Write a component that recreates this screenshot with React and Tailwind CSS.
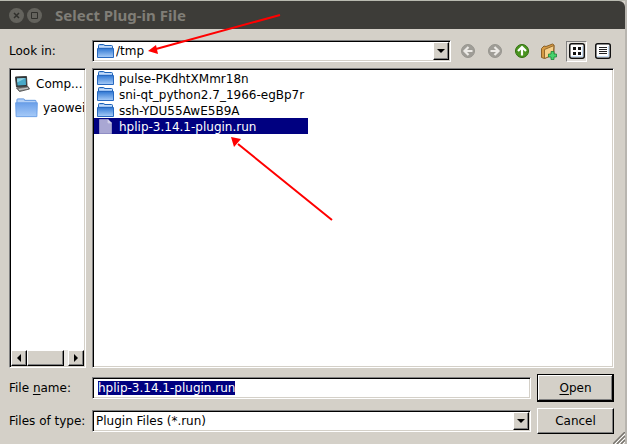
import { useEffect, useRef, useState } from 'react'

const files = [
  { name: 'pulse-PKdhtXMmr18n', type: 'folder' },
  { name: 'sni-qt_python2.7_1966-egBp7r', type: 'folder' },
  { name: 'ssh-YDU55AwE5B9A', type: 'folder' },
  { name: 'hplip-3.14.1-plugin.run', type: 'file' },
]

const sunken = 'border border-t-[#808080] border-l-[#808080] border-r-white border-b-white bg-white p-px shadow-[inset_1px_1px_0_#000,inset_-1px_-1px_0_#d4d0c8]'
const raised = 'border border-t-white border-l-white border-r-black border-b-black bg-[#d4d0c8] shadow-[inset_-1px_-1px_0_#808080]'
const raisedDefault = 'border border-black bg-[#d4d0c8] shadow-[inset_-1px_-1px_0_#000,inset_1px_1px_0_#fff,inset_-2px_-2px_0_#808080]'

function FolderIcon({ className }) {
  return (
    <svg viewBox="0 0 17 14" className={className} aria-hidden="true">
      <defs>
        <linearGradient id="folder" x1="0" y1="0" x2="0" y2="1">
          <stop offset="0" stopColor="#2f77d3" />
          <stop offset="1" stopColor="#a9cdf8" />
        </linearGradient>
      </defs>
      <path d="M1.500 5V1.500q0-1 1-1h4q1 0 1 1h7q1 0 1 1V5" fill="#9cc2f2" stroke="#1c62b9" />
      <path d="M2 2.500h13" stroke="#c5dcf8" />
      <path d="M.5 4.500h16v9H.5z" fill="url(#folder)" stroke="#2869c0" />
    </svg>
  )
}

function PlainFolderIcon() {
  return (
    <svg viewBox="0 0 24 20" className="ml-[2px] h-5 w-[23px] shrink-0" aria-hidden="true">
      <defs>
        <linearGradient id="home" x1="0" y1="0" x2="0" y2="1">
          <stop offset="0" stopColor="#6a9fe9" />
          <stop offset="1" stopColor="#a6caf8" />
        </linearGradient>
      </defs>
      <path d="M2 5V1.500q0-1 1-1h6q1 0 1 1.500h11q1 0 1 1V5" fill="#b4d0f6" stroke="#5b92dc" />
      <path d="M.7 4.500h22.600l-.5 14.500H1.200z" fill="url(#home)" stroke="#6b9fe6" />
    </svg>
  )
}

function FileIcon() {
  return (
    <svg viewBox="0 0 13 15" className="mx-[2px] h-[15px] w-[13px] shrink-0" aria-hidden="true">
      <path d="M.5.500h8.500l3.500 3.500v10.500h-12z" fill="#a9a7d3" stroke="#8f8dc4" />
      <path d="M9 .500v3.500h3.500" fill="#dcdcf0" stroke="#c8c6e4" />
    </svg>
  )
}

function ComputerIcon() {
  return (
    <svg viewBox="0 0 16 16" className="mx-px size-4 shrink-0" aria-hidden="true">
      <path d="M1.500 1 12.500.5l.5 10-10.500.5z" fill="#303436" stroke="#3a3d3e" />
      <path d="m3 2.500 8.700-.5.300 7-8.500.5z" fill="#48a9c8" />
      <path d="m3 2.500 8.700-.5-8.500 4.500z" fill="#8dd0e2" />
      <path d="M2.500 12 14 10.500l1.500 2.500-10 2.500z" fill="#8a8d8b" stroke="#444" strokeWidth=".8" />
      <path d="m5 13.500 9-1.300" stroke="#ddd" strokeWidth=".8" />
    </svg>
  )
}

function ArrowIcon({ direction }) {
  const paths = {
    left: 'M7.500 3 3.500 7l4 4M4 7h7.500',
    right: 'M6.500 3l4 4-4 4M10 7H2.500',
    up: 'M3 7l4-4 4 4M7 4v7.500',
  }
  const up = direction === 'up'
  return (
    <svg viewBox="0 0 14 14" className="size-[14px]" aria-hidden="true">
      <circle cx="7" cy="7" r="6.500" fill={up ? '#4a9420' : '#9f9d97'} stroke={up ? '#2f6f0d' : '#97958f'} />
      <path d={paths[direction]} fill="none" stroke={up ? '#fff' : '#eceae6'} strokeWidth="2.200" />
    </svg>
  )
}

function NewFolderIcon() {
  return (
    <svg viewBox="0 0 17 17" className="size-[17px]" aria-hidden="true">
      <path d="M1.500 5.500 4 3l2 .5 6.500-2.500 1.500 1v9l-9.500 4.500-3-1z" fill="#d59a43" stroke="#8a6128" />
      <path d="m4.500 6.500 9.500-4-1 9.500-8.500 3.500z" fill="#f6d08a" stroke="#94692e" />
      <path d="M11 8.500h3v2.500h2.500v3H14v2.500h-3V14H8.500v-3H11z" fill="#46d26c" stroke="#1a8438" strokeWidth=".8" />
    </svg>
  )
}

function ViewIcon({ list }) {
  return (
    <svg viewBox="0 0 16 16" className="size-4" aria-hidden="true">
      <rect x=".75" y=".75" width="14.500" height="14.500" rx="2" fill="#fff" stroke="#111" strokeWidth="1.500" />
      <path d="M2 13.500h12M13.500 3v10.500" stroke="#c4dcf3" />
      {list ? (
        <path d="M4 4.500h8M4 6.500h8M4 8.500h8M4 10.500h8" stroke="#222" />
      ) : (
        <path d="M4 4h3v3H4zM9 4h3v3H9zM4 9h3v3H4zM9 9h3v3H9z" fill="#111" />
      )}
    </svg>
  )
}

function Triangle({ path }) {
  return (
    <svg viewBox="0 0 8 8" className="size-2" aria-hidden="true">
      <path d={path} fill="#000" />
    </svg>
  )
}

function Combo({ id, value, icon }) {
  return (
    <div className={`flex h-[22px] min-w-0 flex-1 items-center ${sunken}`}>
      {icon}
      <select id={id} className="h-full min-w-0 flex-1 appearance-none bg-transparent pl-[2px] outline-none">
        <option>{value}</option>
      </select>
      <span className={`flex h-full w-4 shrink-0 items-center justify-center ${raised}`}>
        <Triangle path="M0 2h8L4 6z" />
      </span>
    </div>
  )
}

export default function App() {
  const [selected, setSelected] = useState('hplip-3.14.1-plugin.run')
  const [fileName, setFileName] = useState(selected)
  const nameRef = useRef(null)

  useEffect(() => {
    setFileName(selected)
    nameRef.current.focus()
    nameRef.current.select()
  }, [selected])

  return (
    <div className="relative flex h-screen flex-col overflow-hidden border-t border-r-2 border-t-[#b9bab0] border-r-[#b8b5af] bg-[#d4d0c8] font-['DejaVu_Sans',sans-serif] text-[12px] leading-4 text-black">
      <header className="flex h-7 shrink-0 items-center gap-[3px] rounded-tr-md bg-[#3d3c38] pl-[9px]">
        <button aria-label="Close" className="flex size-[15px] items-center justify-center rounded-full bg-[#64635d]">
          <svg viewBox="0 0 7 7" className="size-[7px]"><path d="m1 1 5 5m0-5-5 5" stroke="#30302c" strokeWidth="1.500" /></svg>
        </button>
        <button aria-label="Maximize" className="flex size-[15px] items-center justify-center rounded-full bg-[#64635d]">
          <svg viewBox="0 0 7 7" className="size-[7px]"><path d="M.5.500h6v6h-6z" fill="none" stroke="#30302c" /></svg>
        </button>
        <h1 className="ml-[10px] font-['Noto_Sans',sans-serif] text-[15px] font-bold text-[#807e77]">Select Plug-in File</h1>
      </header>

      <main className="flex min-h-0 flex-1 flex-col pt-[11px] pr-[11px] pb-[10px] pl-[9px]">
        <div className="flex items-center">
          <label htmlFor="look" className="w-[83px] shrink-0">Look in:</label>
          <Combo id="look" value="/tmp" icon={<FolderIcon className="ml-[3px] h-[14px] w-[17px] shrink-0" />} />
          <div className="ml-[3px] flex w-[160px] shrink-0 items-center">
            <button aria-label="Back" disabled className="flex w-[27px] justify-center"><ArrowIcon direction="left" /></button>
            <button aria-label="Forward" disabled className="flex w-[27px] justify-center"><ArrowIcon direction="right" /></button>
            <button aria-label="Parent Directory" className="flex w-[27px] justify-center"><ArrowIcon direction="up" /></button>
            <button aria-label="Create New Folder" className="flex w-[27px] justify-center"><NewFolderIcon /></button>
            <button aria-label="List View" className="ml-1 flex size-[21px] items-center justify-center border border-t-[#808080] border-r-white border-b-white border-l-[#808080] bg-[#e3e0db]"><ViewIcon /></button>
            <button aria-label="Detail View" className="ml-2"><ViewIcon list /></button>
          </div>
        </div>

        <div className="mt-[6px] flex min-h-0 flex-1 gap-[6px]">
          <aside className={`flex w-[77px] shrink-0 flex-col overflow-hidden ${sunken}`}>
            <ul className="flex-1 overflow-hidden pt-[2px] pl-[2px]">
              <li className="flex h-6 items-center gap-[5px] whitespace-nowrap"><ComputerIcon />Comp...</li>
              <li className="flex h-6 items-center gap-[5px] whitespace-nowrap"><PlainFolderIcon />yaowei</li>
            </ul>
            <div className="flex h-4 shrink-0">
              <button aria-label="Scroll left" className={`flex w-4 items-center justify-center ${raised}`}><Triangle path="M6 0v8L2 4z" /></button>
              <span className={`w-[37px] ${raised}`} />
              <span className="flex-1 bg-[#eae8e4]" />
              <button aria-label="Scroll right" className={`flex w-4 items-center justify-center ${raised}`}><Triangle path="M2 0v8l4-4z" /></button>
            </div>
          </aside>
          <div className={`min-w-0 flex-1 ${sunken}`}>
            <ul className="flex w-[214px] flex-col">
              {files.map(file => (
                <li key={file.name}>
                  <button
                    onClick={() => setSelected(file.name)}
                    className={`flex h-4 w-full items-center gap-[5px] pl-[3px] whitespace-nowrap ${selected === file.name ? 'bg-[#000080] text-white' : ''}`}
                  >
                    {file.type === 'folder' ? <FolderIcon className="h-[14px] w-[17px] shrink-0" /> : <FileIcon />}
                    <span className="pt-px">{file.name}</span>
                  </button>
                </li>
              ))}
            </ul>
          </div>
        </div>

        <div className="mt-[6px] flex items-center gap-[6px]">
          <label htmlFor="name" className="w-[77px] shrink-0">File <u className="underline-offset-2">n</u>ame:</label>
          <input
            id="name"
            ref={nameRef}
            value={fileName}
            onChange={e => setFileName(e.target.value)}
            className={`h-[22px] min-w-0 flex-1 indent-[4px] outline-none selection:bg-[#000080] selection:text-white ${sunken}`}
          />
          <button className={`h-7 w-[77px] shrink-0 ${raisedDefault}`}><u className="underline-offset-2">O</u>pen</button>
        </div>
        <div className="mt-[6px] flex items-center gap-[6px]">
          <label htmlFor="type" className="w-[77px] shrink-0">Files of type:</label>
          <Combo id="type" value="Plugin Files (*.run)" />
          <button className={`h-[26px] w-[77px] shrink-0 ${raised}`}>Cancel</button>
        </div>
      </main>

      <svg viewBox="0 0 12 12" className="absolute right-0 bottom-0 size-3" aria-hidden="true">
        <path d="M0 12 12 0M4 12l8-8M8 12l4-4" stroke="#77746e" strokeWidth="1.500" />
        <path d="m2 12 10-10M6 12l6-6M10 12l2-2" stroke="#fff" />
      </svg>
      <svg viewBox="0 0 627 444" className="pointer-events-none absolute -top-px left-0 h-[444px] w-[627px]" aria-hidden="true">
        <path d="M280 15 156 49M332 220 238 144" stroke="#f00" strokeWidth="2" />
        <path d="m148 51 8-6 2 9zM231 137l10 2-7 8z" fill="#f00" />
      </svg>
    </div>
  )
}
